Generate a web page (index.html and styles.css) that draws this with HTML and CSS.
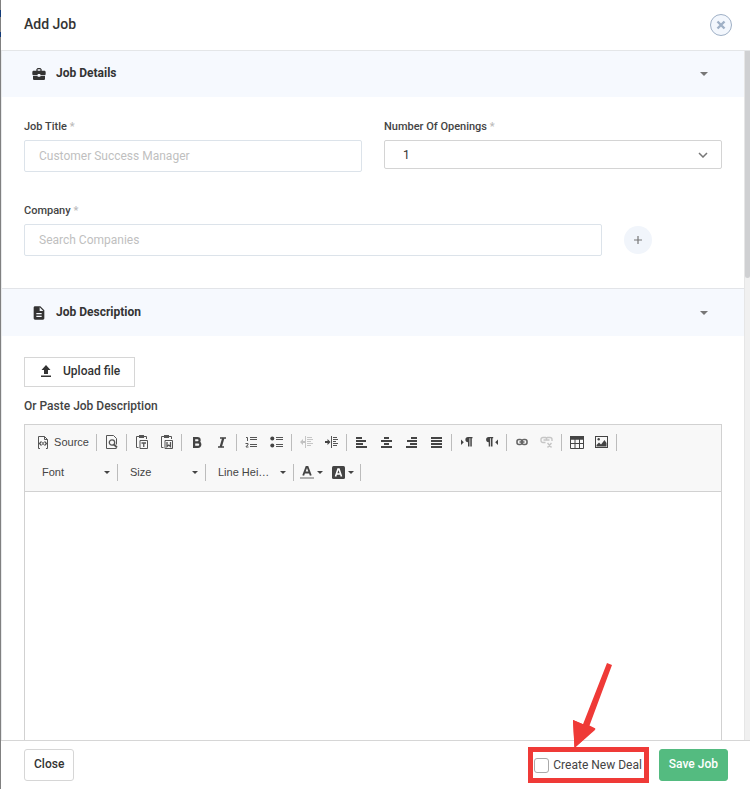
FILE: index.html
```
<!DOCTYPE html>
<html lang="en">
<head>
    <meta charset="UTF-8">
    <meta name="viewport" content="width=device-width, initial-scale=1.0">
    <title>Add Job</title>
    <link rel="stylesheet" href="styles.css">
</head>
<body>
    <div class="modal">
        <header class="modal-header">
            <h1>Add Job</h1>
            <button class="close-icon" type="button" aria-label="Close">
                <svg width="10" height="10" viewBox="0 0 10 10"><path d="M1.5 1.5l7 7M8.5 1.5l-7 7" stroke="#9fb0c6" stroke-width="2.4"/></svg>
            </button>
        </header>

        <div class="modal-body">
            <form class="content" id="job-form">
                <!-- Job Details -->
                <h2 class="section-header">
                    <svg width="16" height="16" viewBox="0 0 24 24" fill="#333"><path d="M10 16v-1H3v4c0 1.1.9 2 2 2h14c1.1 0 2-.9 2-2v-4h-7v1h-4zm10-9h-4V5l-2-2h-4L8 5v2H4c-1.100 0-2 .9-2 2v3c0 1.100.9 2 2 2h6v-2h4v2h6c1.100 0 2-.9 2-2V9c0-1.100-.9-2-2-2zm-6 0h-4V5h4v2z"/></svg>
                    <span>Job Details</span>
                    <svg class="caret" width="8" height="4" viewBox="0 0 8 4"><path d="M0 0h8L4 4z" fill="#777"/></svg>
                </h2>
                <div class="section details">
                    <div class="field">
                        <label for="title">Job Title <i>*</i></label>
                        <input class="text-input" type="text" id="title" placeholder="Customer Success Manager">
                    </div>
                    <div class="field">
                        <label for="openings">Number Of Openings <i>*</i></label>
                        <div class="select-wrap">
                            <select id="openings">
                                <option>1</option>
                                <option>2</option>
                                <option>3</option>
                            </select>
                            <svg width="10" height="6" viewBox="0 0 10 6"><path d="M1 1l4 4 4-4" fill="none" stroke="#777" stroke-width="1.5"/></svg>
                        </div>
                    </div>
                    <div class="field company">
                        <label for="company">Company <i>*</i></label>
                        <div class="company-row">
                            <input class="text-input" type="text" id="company" placeholder="Search Companies">
                            <button class="add-button" type="button" aria-label="Add company">
                                <svg width="8" height="8" viewBox="0 0 8 8"><path d="M4 0v8M0 4h8" stroke="#777" stroke-width="1.2"/></svg>
                            </button>
                        </div>
                    </div>
                </div>

                <!-- Job Description -->
                <h2 class="section-header bordered">
                    <svg width="16" height="16" viewBox="0 0 24 24" fill="#333"><path d="M14 2H6c-1.100 0-2 .9-2 2v16c0 1.100.9 2 2 2h12c1.100 0 2-.9 2-2V8l-6-6zm2 16H8v-2h8v2zm0-4H8v-2h8v2zm-3-5V3.500L18.500 9H13z"/></svg>
                    <span>Job Description</span>
                    <svg class="caret" width="8" height="4" viewBox="0 0 8 4"><path d="M0 0h8L4 4z" fill="#777"/></svg>
                </h2>
                <div class="section description">
                    <button class="upload-button" type="button">
                        <svg width="10" height="12" viewBox="0 0 10 12" fill="#333"><path d="M5 0L.5 5H3v4h4V5h2.500zM0 10.500h10V12H0z"/></svg>
                        Upload file
                    </button>
                    <label class="paste-label" for="description">Or Paste Job Description</label>
                    <div class="editor">
                        <div class="toolbar">
                            <div class="tool-row">
                                <button class="source" type="button">
                                    <svg width="12" height="13" viewBox="0 0 12 13" fill="none" stroke="#555"><path d="M3 12.500H1.500V.5h6l3 3v9H9M7.500.5v3h3"/><path d="M4.500 5.500l-2 2 2 2M7.500 5.500l2 2-2 2M6 6v3" stroke-width="1.300"/></svg>
                                    Source
                                </button>
                                <span class="sep"></span>
                                <button type="button" title="Preview">
                                    <svg width="13" height="14" viewBox="0 0 13 14" fill="none" stroke="#555"><path d="M11.500 13.500h-10V.5h7l3 3v6"/><circle cx="7" cy="7.500" r="2.700" stroke-width="1.300"/><path d="M9 9.500l3 3" stroke-width="1.800"/></svg>
                                </button>
                                <span class="sep"></span>
                                <button type="button" title="Paste as plain text">
                                    <svg width="14" height="15" viewBox="0 0 14 15" fill="none" stroke="#555"><path d="M3.500 12.500h-2v-11H4M9 1.500h2.500V4M5 5.500h7.500v8H5z"/><path d="M4 0h5v3H4z" fill="#555" stroke="none"/><path d="M6.500 8h4.500M8.750 8v4" stroke-width="1.300"/></svg>
                                </button>
                                <button type="button" title="Paste from Word">
                                    <svg width="14" height="15" viewBox="0 0 14 15" fill="none" stroke="#555"><path d="M3.500 12.500h-2v-11H4M9 1.500h2.500V4M5 5.500h7.500v8H5z"/><path d="M4 0h5v3H4z" fill="#555" stroke="none"/><path d="M7 7v4.500L8.750 10l1.750 1.500V7" stroke-width="1.300"/></svg>
                                </button>
                                <span class="sep"></span>
                                <button type="button" title="Bold">
                                    <svg width="10" height="11" viewBox="0 0 10 11" fill="none" stroke="#444" stroke-width="2.200"><path d="M2.100 1.100h3.400a2 2 0 010 4.200H2.100zM2.100 5.300H6a2.300 2.300 0 010 4.600H2.100z"/></svg>
                                </button>
                                <button type="button" title="Italic">
                                    <svg width="10" height="11" viewBox="0 0 10 11" fill="none" stroke="#444"><path d="M3 1h6M1 10h6" stroke-width="1.500"/><path d="M6.300 1L3.700 10" stroke-width="2.300"/></svg>
                                </button>
                                <span class="sep"></span>
                                <button type="button" title="Numbered list">
                                    <svg width="13" height="12" viewBox="0 0 13 12" fill="none" stroke="#555"><path d="M5 1.500h7M5 3.500h7M5 8.500h7M5 10.500h7M1 1.500h1.500V5M.5 7.500H3v1.500L1 10.500v.5h2.500"/></svg>
                                </button>
                                <button type="button" title="Bulleted list">
                                    <svg width="13" height="12" viewBox="0 0 13 12" fill="none" stroke="#555"><path d="M6 1.500h7M6 3.500h7M6 8.500h7M6 10.500h7"/><circle cx="2.300" cy="2.500" r="2" fill="#444" stroke="none"/><circle cx="2.300" cy="9.500" r="2" fill="#444" stroke="none"/></svg>
                                </button>
                                <span class="sep"></span>
                                <button type="button" title="Decrease indent" disabled>
                                    <svg width="13" height="12" viewBox="0 0 13 12" fill="none" stroke="#555"><path d="M5.500 0v12M7 1.500h5M7 3.500h6M7 5.500h4M7 7.500h6M7 9.500h4"/><path d="M0 6l3-3v2h2v2H3v2z" fill="#444" stroke="none"/></svg>
                                </button>
                                <button type="button" title="Increase indent">
                                    <svg width="13" height="12" viewBox="0 0 13 12" fill="none" stroke="#555"><path d="M6.500 0v12M8 1.500h4M8 3.500h5M8 5.500h3M8 7.500h5M8 9.500h4"/><path d="M5.500 6l-3-3v2H0v2h2.500v2z" fill="#444" stroke="none"/></svg>
                                </button>
                                <span class="sep"></span>
                                <button type="button" title="Align left">
                                    <svg width="11" height="11" viewBox="0 0 11 11" stroke="#444" stroke-width="2"><path d="M0 1h6M0 4h10M0 7h7M0 10h11"/></svg>
                                </button>
                                <button type="button" title="Center">
                                    <svg width="11" height="11" viewBox="0 0 11 11" stroke="#444" stroke-width="2"><path d="M3 1h5M0 4h11M3 7h5M0 10h11"/></svg>
                                </button>
                                <button type="button" title="Align right">
                                    <svg width="11" height="11" viewBox="0 0 11 11" stroke="#444" stroke-width="2"><path d="M5 1h6M1 4h10M4 7h7M0 10h11"/></svg>
                                </button>
                                <button type="button" title="Justify">
                                    <svg width="11" height="11" viewBox="0 0 11 11" stroke="#444" stroke-width="2"><path d="M0 1h11M0 4h11M0 7h11M0 10h11"/></svg>
                                </button>
                                <span class="sep"></span>
                                <button type="button" title="Text direction left to right">
                                    <svg width="12" height="10" viewBox="0 0 12 10" fill="#444"><path d="M0 2.500l2.800 2.700L0 8zM11.500 0v1.200h-.7V9.500H9.300V1.200h-.8V9.500H7V5.200a2.600 2.600 0 010-5.200z"/></svg>
                                </button>
                                <button type="button" title="Text direction right to left">
                                    <svg width="12" height="10" viewBox="0 0 12 10" fill="#444"><path d="M12 2.500L9.200 5.200 12 8zM7.200 0v1.200h-.7V9.500H5V1.200h-.8V9.500H2.700V5.200a2.600 2.600 0 010-5.200z"/></svg>
                                </button>
                                <span class="sep"></span>
                                <button type="button" title="Link">
                                    <svg width="12" height="8" viewBox="0 0 12 8" fill="none" stroke="#666" stroke-width="1.600"><rect x="1" y="1.500" width="5" height="5" rx="2"/><rect x="6" y="1.500" width="5" height="5" rx="2"/><path d="M3.500 4h5"/></svg>
                                </button>
                                <button type="button" title="Unlink" disabled>
                                    <svg width="13" height="12" viewBox="0 0 13 12" fill="none" stroke="#555" stroke-width="1.400"><path d="M5.500 6.500H3a2 2 0 01-2-2v-1a2 2 0 012-2h2.500a1.500 1.500 0 011 1 1.500 1.500 0 011-1H10a2 2 0 012 2V5M3.500 4h6M7.500 7l4 4.500M11.500 7l-4 4.500"/></svg>
                                </button>
                                <span class="sep"></span>
                                <button type="button" title="Table">
                                    <svg width="14" height="13" viewBox="0 0 14 13" fill="none" stroke="#444"><path d="M.5 3h13v9.500H.5zM5 3v9.500M9.500 3v9.500M.5 7.500h13"/><path d="M0 0h14v3.500H0z" fill="#444" stroke="none"/></svg>
                                </button>
                                <button type="button" title="Image">
                                    <svg width="13" height="12" viewBox="0 0 13 12" fill="none" stroke="#444"><rect x=".5" y=".5" width="12" height="11"/><path d="M1.500 10.500V9L4 6.500l2 2L9.500 4l2 3v3.500z" fill="#444" stroke="none"/><circle cx="3.700" cy="3.300" r="1.200" fill="#444" stroke="none"/></svg>
                                </button>
                                <span class="sep"></span>
                            </div>
                            <div class="tool-row">
                                <div class="combo">
                                    <select aria-label="Font"><option>Font</option></select>
                                    <svg width="6" height="3" viewBox="0 0 6 3"><path d="M0 0h6L3 3z" fill="#444"/></svg>
                                </div>
                                <span class="sep"></span>
                                <div class="combo">
                                    <select aria-label="Size"><option>Size</option></select>
                                    <svg width="6" height="3" viewBox="0 0 6 3"><path d="M0 0h6L3 3z" fill="#444"/></svg>
                                </div>
                                <span class="sep"></span>
                                <div class="combo">
                                    <select aria-label="Line height"><option>Line Hei…</option></select>
                                    <svg width="6" height="3" viewBox="0 0 6 3"><path d="M0 0h6L3 3z" fill="#444"/></svg>
                                </div>
                                <span class="sep"></span>
                                <button class="color-button" type="button" title="Text color">
                                    <svg width="14" height="14" viewBox="0 0 14 14" fill="none" stroke="#444"><path d="M3.200 10.500L6.400 2h1.200l3.200 8.500M4.300 7.500h5.400" stroke-width="1.900"/><path d="M0 13h14" stroke="#999" stroke-width="1.500"/></svg>
                                    <svg width="6" height="3" viewBox="0 0 6 3"><path d="M0 0h6L3 3z" fill="#444"/></svg>
                                </button>
                                <button class="color-button" type="button" title="Background color">
                                    <svg width="13" height="13" viewBox="0 0 13 13" fill="none" stroke="#fff"><rect width="13" height="13" rx="1.500" fill="#444" stroke="none"/><path d="M3.500 10.500L6 3h1l2.500 7.500M4.500 8h4" stroke-width="1.600"/></svg>
                                    <svg width="6" height="3" viewBox="0 0 6 3"><path d="M0 0h6L3 3z" fill="#444"/></svg>
                                </button>
                                <span class="sep"></span>
                            </div>
                        </div>
                        <textarea id="description"></textarea>
                    </div>
                </div>
            </form>
            <div class="scroll-track"><div class="scroll-thumb"></div></div>
        </div>

        <footer class="modal-footer">
            <button class="close-button" type="button">Close</button>
            <div class="highlight">
                <svg class="arrow" width="42" height="86" viewBox="0 0 42 86" fill="#ef3a37"><path d="M36 1l5 2-22.500 60.500 6 3L3.500 86 2 58l10 4.200z"/><path d="M2 58l22.500 9.500L3.500 86z"/></svg>
                <label class="deal-label"><input type="checkbox" id="deal">Create New Deal</label>
            </div>
            <button class="save-button" type="submit" form="job-form">Save Job</button>
        </footer>
    </div>
</body>
</html>
```
FILE: styles.css
```
* {
    box-sizing: border-box;
}
body {
    margin: 0;
    font-family: Roboto, sans-serif;
    font-size: 12px;
    color: #333;
    /* sliver of the dimmed page behind the modal */
    background: linear-gradient(#808080 10px, #123a78 10px, #123a78 17px, #808080 17px, #808080 32px, #123a78 32px, #123a78 37px, #808080 37px);
}
button, input, select, textarea {
    font-family: inherit;
    font-size: inherit;
    color: inherit;
}
button {
    padding: 0;
    border: none;
    background: none;
    cursor: pointer;
}
.modal {
    display: flex;
    flex-direction: column;
    height: 100vh;
    margin-left: 1px;
    background-color: #fff;
}
.modal-header {
    display: flex;
    align-items: center;
    justify-content: space-between;
    height: 51px;
    padding: 0 18px 0 23px;
    border-bottom: 1px solid #e4e6e8;
}
.modal-header h1 {
    margin: 0;
    padding-bottom: 2px;
    font-size: 14px;
    font-weight: 500;
}
.close-icon {
    display: flex;
    align-items: center;
    justify-content: center;
    width: 22px;
    height: 22px;
    border: 1px solid #9fb0c6;
    border-radius: 50%;
    background-color: #f3f7fd;
}
.modal-body {
    display: flex;
    flex: 1;
    min-height: 0;
}
.content {
    flex: 1;
    border-left: 1px solid #e8eaec;
    overflow-y: auto;
    scrollbar-width: none;
}
.scroll-track {
    width: 6px;
    border-left: 1px solid #e6e6e6;
    background-color: #f0f0f0;
}
.scroll-thumb {
    height: 33%;
    border-radius: 0 0 3px 3px;
    background-color: #cfd0d2;
}

/* Sections */
.section-header {
    display: flex;
    align-items: center;
    gap: 9px;
    height: 46px;
    margin: 0;
    padding: 0 36px 0 29px;
    background-color: #f6f9fe;
    font-size: 12px;
    font-weight: 700;
}
.section-header.bordered {
    height: 48px;
    border-top: 1px solid #e2e4e8;
}
.section-header span {
    padding-bottom: 2px;
}
.section-header .caret {
    margin-left: auto;
}
.section {
    padding: 20px 22px;
}
.details {
    display: grid;
    grid-template-columns: 1fr 1fr;
    gap: 29px 22px;
    padding-bottom: 32px;
}
.description {
    padding-top: 21px;
}
.field label {
    display: block;
    height: 23px;
    line-height: 20px;
    font-size: 11px;
    font-weight: 500;
    color: #444;
}
.field i {
    font-style: normal;
    color: #bbb;
}
.company {
    grid-column: 1 / 3;
}
.text-input {
    width: 100%;
    height: 32px;
    padding: 0 14px;
    border: 1px solid #dce3ea;
    border-radius: 2px;
    background-color: #fff;
}
.text-input::placeholder {
    color: #bfbfbf;
}
.select-wrap, .combo {
    display: flex;
    position: relative;
}
.select-wrap select, .combo select {
    width: 100%;
    border: 1px solid #d4d4d4;
    background: none;
    appearance: none;
}
.select-wrap select {
    height: 29px;
    padding: 0 18px;
    border-radius: 2px;
}
.select-wrap svg {
    position: absolute;
    top: 12px;
    right: 14px;
    pointer-events: none;
}
.company-row {
    display: flex;
    align-items: center;
    gap: 22px;
    padding-right: 70px;
}
.company-row .text-input {
    flex: 1;
}
.add-button {
    display: flex;
    align-items: center;
    justify-content: center;
    width: 28px;
    height: 28px;
    border-radius: 50%;
    background-color: #f1f5fb;
}
.upload-button {
    display: flex;
    align-items: center;
    gap: 12px;
    height: 30px;
    padding: 0 14px 2px 16px;
    border: 1px solid #d6d6d6;
    font-weight: 500;
}
.paste-label {
    display: block;
    margin: 10px 0 9px;
    line-height: 18px;
    font-weight: 500;
    color: #444;
}

/* Editor */
.editor {
    border: 1px solid #d1d1d1;
}
.toolbar {
    padding: 2px 7px 4px;
    border-bottom: 1px solid #d1d1d1;
    background-color: #f8f8f8;
    font-family: "Liberation Sans", Arial, sans-serif;
    font-size: 11px;
    color: #444;
}
.tool-row {
    display: flex;
    align-items: center;
    height: 30px;
}
.tool-row button {
    display: flex;
    align-items: center;
    justify-content: center;
    width: 25px;
    height: 25px;
}
.tool-row button:disabled {
    opacity: 0.3;
}
.tool-row .source {
    gap: 5px;
    width: 62px;
}
.sep {
    width: 1px;
    height: 17px;
    margin: 0 2px;
    background-color: #bcbcbc;
}
.combo {
    width: 83px;
}
.combo select {
    height: 25px;
    padding: 0 16px 0 10px;
    border: none;
}
.combo svg {
    position: absolute;
    top: 11px;
    right: 5px;
    pointer-events: none;
}
.tool-row .color-button {
    gap: 3px;
    width: 31px;
}
.editor textarea {
    display: block;
    width: 100%;
    height: 400px;
    padding: 20px;
    border: none;
    outline: none;
    resize: none;
}

/* Footer */
.modal-footer {
    display: flex;
    align-items: center;
    height: 49px;
    padding: 0 22px 0 23px;
    border-top: 1px solid #d6d6d6;
}
.close-button, .save-button {
    height: 32px;
    padding: 0 9px 2px;
    border: 1px solid #d6d6d6;
    border-radius: 3px;
    font-weight: 500;
}
.save-button {
    border-color: #54bb80;
    background-color: #54bb80;
    color: #fff;
}
.highlight {
    position: relative;
    margin: 0 10px 0 auto;
    border: 5px solid #ef3a37;
}
.deal-label {
    display: flex;
    align-items: center;
    gap: 4px;
    height: 26px;
    padding: 0 2px 0 1px;
    color: #444;
}
.deal-label input {
    width: 15px;
    height: 15px;
    margin: 0;
    border: 1px solid #aaa;
    border-radius: 3px;
    background-color: #fff;
    appearance: none;
}
.deal-label input:checked {
    background-color: #54bb80;
}
.arrow {
    position: absolute;
    left: 38px;
    bottom: 30px;
}
```
